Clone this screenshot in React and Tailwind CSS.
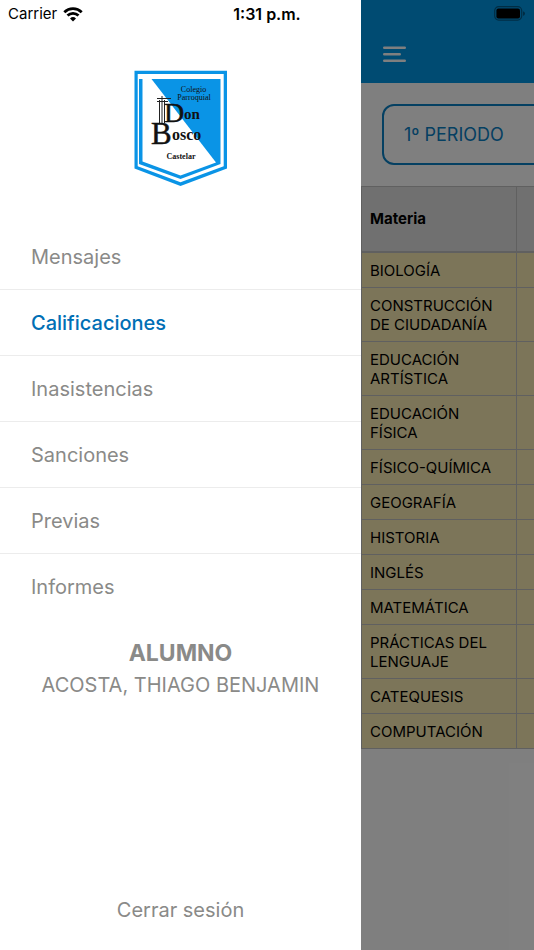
// src/App.jsx
import React from "react";

const menuItems = [
  { label: "Mensajes" },
  { label: "Calificaciones", active: true },
  { label: "Inasistencias" },
  { label: "Sanciones" },
  { label: "Previas" },
  { label: "Informes" },
];

const materias = [
  "BIOLOGÍA",
  "CONSTRUCCIÓN DE CIUDADANÍA",
  "EDUCACIÓN ARTÍSTICA",
  "EDUCACIÓN FÍSICA",
  "FÍSICO-QUÍMICA",
  "GEOGRAFÍA",
  "HISTORIA",
  "INGLÉS",
  "MATEMÁTICA",
  "PRÁCTICAS DEL LENGUAJE",
  "CATEQUESIS",
  "COMPUTACIÓN",
];

function WifiIcon() {
  return (
    <svg width="20" height="15" viewBox="0 0 20 15" fill="none" aria-hidden="true">
      <path d="M1.3 5.2a12.6 12.6 0 0 1 17.4 0" stroke="#000" strokeWidth="2.8" />
      <path d="M4.5 8.600a8 8 0 0 1 11 0" stroke="#000" strokeWidth="2.8" />
      <path d="M10 14.6 7 11.5a4.3 4.3 0 0 1 6 0z" fill="#000" />
    </svg>
  );
}

function BatteryIcon() {
  return (
    <svg width="32" height="15" viewBox="0 0 32 15" fill="none" aria-hidden="true">
      <rect x="0.7" y="0.7" width="27" height="13.4" rx="4" stroke="#000" strokeOpacity="0.4" strokeWidth="1.2" />
      <rect x="2.4" y="2.4" width="23.6" height="10" rx="2" fill="#000" />
      <path d="M29.2 5.2v4.6c1-.4 1.6-1.3 1.6-2.3s-.6-1.9-1.6-2.3z" fill="#000" fillOpacity="0.5" />
    </svg>
  );
}

function StatusBar() {
  return (
    <div className="absolute inset-x-0 top-0 z-20 grid h-7 grid-cols-[1fr_auto_1fr] items-center px-2 text-[15px] leading-5 text-black">
      <div className="flex items-center gap-1.5">
        <span>Carrier</span>
        <WifiIcon />
      </div>
      <span className="text-base leading-5 font-semibold">1:31 p.m.</span>
      <div className="flex justify-end pb-0.5">
        <BatteryIcon />
      </div>
    </div>
  );
}

function SchoolLogo() {
  return (
    <svg
      width="94"
      height="117"
      viewBox="0 0 94 117"
      role="img"
      aria-label="Colegio Parroquial Don Bosco Castelar"
      fontFamily="'Liberation Serif', serif"
    >
      {/* shield: outer border, white gap, inner band and diagonal field */}
      <path d="M.5.800h92.500v97.700L46.500 116 .5 98.500z" fill="#0a94e6" />
      <path d="M3.700 4h86v92.300L46.500 112.300 3.700 96.300z" fill="#fff" />
      <path d="M5 9h81.500v85L46.500 109 5 94z" fill="#0a94e6" />
      <path d="M8.500 9h9L82 92.500 46.500 105.500 8.500 91.500z" fill="#fff" />
      <g stroke="#222" strokeWidth="1">
        <path d="M25.500 30v23M28 26v27M30.500 30v23" />
        <path d="M23 28.500h14M23 31.500h11" />
      </g>
      <g fill="#111">
        <text x="59.500" y="22" fontSize="8" textAnchor="middle">Colegio</text>
        <text x="60" y="30" fontSize="8" textAnchor="middle">Parroquial</text>
        <text x="30" y="52" fontSize="28" stroke="#111" strokeWidth="0.500">D</text>
        <text x="50" y="49" fontSize="15" fontWeight="bold">on</text>
        <text x="17" y="74" fontSize="31" stroke="#111" strokeWidth="0.500">B</text>
        <text x="38" y="70" fontSize="16" fontWeight="bold">osco</text>
        <text x="47" y="89" fontSize="8" fontWeight="bold" textAnchor="middle">Castelar</text>
      </g>
    </svg>
  );
}

function Drawer() {
  return (
    <aside className="flex flex-col bg-white text-xl text-[#8a8a88]">
      <div className="flex justify-center pt-[70px] pb-[37px]">
        <SchoolLogo />
      </div>
      <nav className="divide-y divide-[#ececec]">
        {menuItems.map((item) => (
          <a
            key={item.label}
            href="#"
            aria-current={item.active ? "page" : undefined}
            className={
              item.active
                ? "flex h-[66px] items-center px-[31px] font-medium text-[#006fb5]"
                : "flex h-[66px] items-center px-[31px]"
            }
          >
            {item.label}
          </a>
        ))}
      </nav>
      <div className="mt-[17px] text-center">
        <h2 className="text-[23px] leading-8 font-bold">ALUMNO</h2>
        <p className="leading-8">ACOSTA, THIAGO BENJAMIN</p>
      </div>
      <button type="button" className="mt-auto mb-6 self-center leading-8">
        Cerrar sesión
      </button>
    </aside>
  );
}

function Calificaciones() {
  return (
    <main className="relative overflow-hidden bg-white">
      <header className="flex h-[83px] items-end bg-[#0096e4] px-[22px] pb-5">
        <button type="button" aria-label="Abrir menú" className="text-white">
          <svg width="23" height="17" viewBox="0 0 23 17" fill="none" stroke="currentColor" strokeWidth="2.400" strokeLinecap="round">
            <path d="M1.200 1.700h20.600M1.200 8.200h15.600M1.200 14.700h20.600" />
          </svg>
        </button>
      </header>
      <div className="w-[400px] py-[21px] pl-[21px]">
        <button
          type="button"
          className="flex h-[61px] w-full items-center rounded-xl border-2 border-[#0a80c4] px-5 text-lg text-[#0a80c4]"
        >
          1º PERIODO
        </button>
      </div>
      <table className="w-[400px] table-fixed border-collapse text-left text-[15px] leading-[19px] text-black">
        <thead>
          <tr className="h-[65px] bg-[#e0e0e0]">
            <th scope="col" className="w-[155px] border border-b-2 border-[#c0c0c0] px-2 font-bold">
              Materia
            </th>
            <td className="border border-b-2 border-[#c0c0c0]" />
          </tr>
        </thead>
        <tbody>
          {materias.map((materia) => (
            <tr key={materia} className="bg-[#f8eab2]">
              <td className="border border-[#c0c0c0] px-2 pt-2 pb-[7px]">{materia}</td>
              <td className="border border-[#c0c0c0]" />
            </tr>
          ))}
        </tbody>
      </table>
      <div className="absolute inset-0 bg-black/50" />
    </main>
  );
}

export default function App() {
  return (
    <div className="relative grid min-h-screen grid-cols-[361fr_173fr] font-[Inter,sans-serif]">
      <StatusBar />
      <Drawer />
      <Calificaciones />
    </div>
  );
}
